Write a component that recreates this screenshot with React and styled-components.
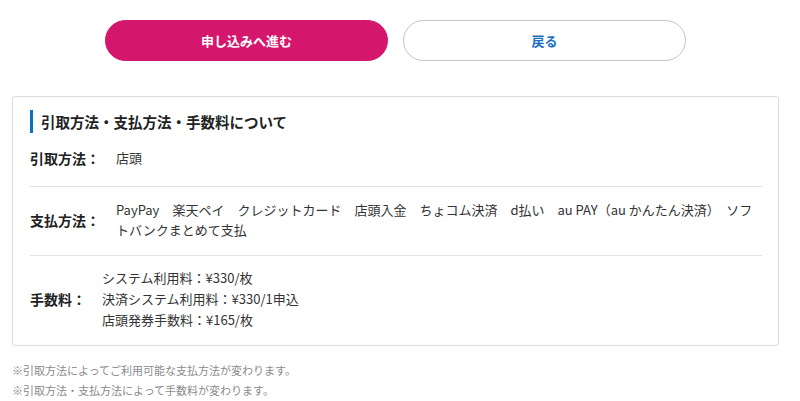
import React from "react";
import styled, { createGlobalStyle } from "styled-components";

const GlobalStyle = createGlobalStyle`
  body {
    margin: 0;
    background: #fff;
    font-family: "Noto Sans CJK JP", "Noto Sans", sans-serif;
    color: #222;
  }
`;

const Page = styled.div`
  width: 767px;
  margin-left: 12px;
  padding-top: 20px;
`;

const ButtonRow = styled.div`
  display: flex;
  justify-content: center;
  gap: 15px;
`;

const Button = styled.button`
  width: 283px;
  height: 41px;
  border-radius: 21px;
  font-family: inherit;
  font-size: 13px;
  font-weight: 700;
  cursor: pointer;
  background: ${(p) => (p.$primary ? "#d5166d" : "#fff")};
  color: ${(p) => (p.$primary ? "#fff" : "#1b6fc2")};
  border: 1px solid ${(p) => (p.$primary ? "#d5166d" : "#c4c4c4")};
`;

const Card = styled.section`
  margin-top: 35px;
  border: 1px solid #dcdcdc;
  border-radius: 3px;
  padding: 13px 16px 0 17px;
`;

const Heading = styled.h2`
  margin: 0;
  font-size: 14.5px;
  font-weight: 700;
  line-height: 23px;
  border-left: 3px solid #0a72c4;
  padding-left: 8px;
  color: #222;
`;

const Row = styled.div`
  display: flex;
  align-items: center;
  padding: ${(p) => p.$pad || "13px 0 16px"};
  border-bottom: ${(p) => (p.$last ? "none" : "1px solid #e2e2e2")};
`;

const Label = styled.div`
  flex: none;
  font-size: 14px;
  font-weight: 700;
  line-height: 24px;
  margin-right: 16px;
  color: #222;
`;

const Value = styled.div`
  flex: 1;
  font-size: 13px;
  line-height: ${(p) => p.$lh || "19.5px"};
  color: #333;
`;

const Notes = styled.div`
  margin-top: 14px;
  font-size: 11px;
  line-height: 20px;
  color: #8a8a8a;
`;

export default function App() {
  return (
    <>
      <GlobalStyle />
      <Page>
        <ButtonRow>
          <Button $primary>申し込みへ進む</Button>
          <Button>戻る</Button>
        </ButtonRow>
        <Card>
          <Heading>引取方法・支払方法・手数料について</Heading>
          <Row>
            <Label>引取方法：</Label>
            <Value>店頭</Value>
          </Row>
          <Row>
            <Label>支払方法：</Label>
            <Value>
              PayPay　楽天ペイ　クレジットカード　店頭入金　ちょコム決済　d払い　au PAY（au かんたん決済）　ソフトバンクまとめて支払
            </Value>
          </Row>
          <Row $last $pad="11px 0 15px">
            <Label>手数料：</Label>
            <Value $lh="21px">
              システム利用料：¥330/枚
              <br />
              決済システム利用料：¥330/1申込
              <br />
              店頭発券手数料：¥165/枚
            </Value>
          </Row>
        </Card>
        <Notes>
          ※引取方法によってご利用可能な支払方法が変わります。
          <br />
          ※引取方法・支払方法によって手数料が変わります。
        </Notes>
      </Page>
    </>
  );
}
